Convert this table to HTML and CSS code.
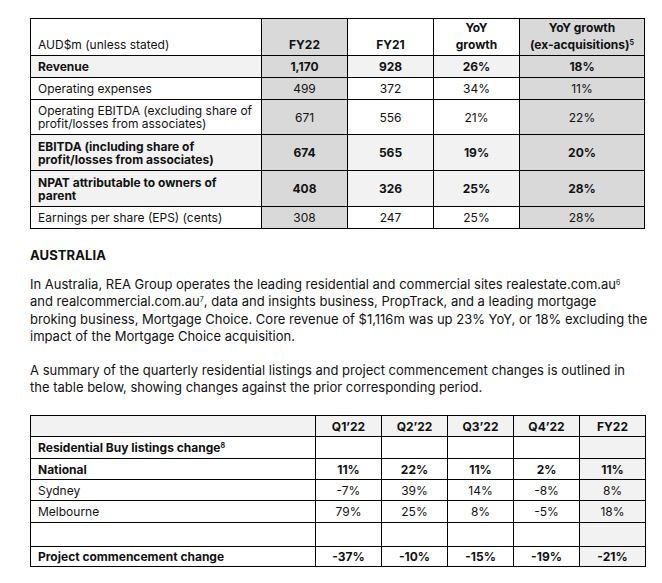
FILE: index.html
```html
<!DOCTYPE html>
<html>
<head>
<meta charset="utf-8">
<link rel="stylesheet" href="styles.css">
</head>
<body>
<div class="page">
  <table class="fin">
    <colgroup>
      <col class="c-label"><col class="c-num"><col class="c-num"><col class="c-num"><col class="c-wide">
    </colgroup>
    <tr class="head">
      <td class="label">AUD$m (unless stated)</td>
      <td class="gray b">FY22</td>
      <td class="b">FY21</td>
      <td class="b">YoY<br>growth</td>
      <td class="gray b">YoY growth<br>(ex-acquisitions)<sup>5</sup></td>
    </tr>
    <tr class="r23 hl b">
      <td class="label">Revenue</td>
      <td class="gray">1,170</td>
      <td>928</td>
      <td>26%</td>
      <td class="gray">18%</td>
    </tr>
    <tr class="r23">
      <td class="label">Operating expenses</td>
      <td class="gray">499</td>
      <td>372</td>
      <td>34%</td>
      <td class="gray">11%</td>
    </tr>
    <tr class="r35">
      <td class="label">Operating EBITDA (excluding share of profit/losses from associates)</td>
      <td class="gray">671</td>
      <td>556</td>
      <td>21%</td>
      <td class="gray">22%</td>
    </tr>
    <tr class="r36 hl b">
      <td class="label">EBITDA (including share of profit/losses from associates)</td>
      <td class="gray">674</td>
      <td>565</td>
      <td>19%</td>
      <td class="gray">20%</td>
    </tr>
    <tr class="r36 hl b">
      <td class="label">NPAT attributable to owners of parent</td>
      <td class="gray">408</td>
      <td>326</td>
      <td>25%</td>
      <td class="gray">28%</td>
    </tr>
    <tr class="r21">
      <td class="label">Earnings per share (EPS) (cents)</td>
      <td class="gray">308</td>
      <td>247</td>
      <td>25%</td>
      <td class="gray">28%</td>
    </tr>
  </table>

  <h2 class="heading">AUSTRALIA</h2>
  <p class="para">In Australia, REA Group operates the leading residential and commercial sites realestate.com.au<sup>6</sup><br>and realcommercial.com.au<sup>7</sup>, data and insights business, PropTrack, and a leading mortgage<br>broking business, Mortgage Choice. Core revenue of $1,116m was up 23% YoY, or 18% excluding the<br>impact of the Mortgage Choice acquisition.</p>
  <p class="para">A summary of the quarterly residential listings and project commencement changes is outlined in<br>the table below, showing changes against the prior corresponding period.</p>

  <table class="listings">
    <colgroup>
      <col class="l-label"><col class="l-num"><col class="l-num"><col class="l-num"><col class="l-num"><col class="l-num">
    </colgroup>
    <tr class="lhead b">
      <td class="label"></td>
      <td>Q1’22</td>
      <td>Q2’22</td>
      <td>Q3’22</td>
      <td>Q4’22</td>
      <td>FY22</td>
    </tr>
    <tr class="b row-res">
      <td class="label">Residential Buy listings change<sup>8</sup></td>
      <td></td><td></td><td></td><td></td><td class="fy"></td>
    </tr>
    <tr class="b row-nat">
      <td class="label">National</td>
      <td>11%</td><td>22%</td><td>11%</td><td>2%</td><td class="fy">11%</td>
    </tr>
    <tr class="row-syd">
      <td class="label">Sydney</td>
      <td>-7%</td><td>39%</td><td>14%</td><td>-8%</td><td class="fy">8%</td>
    </tr>
    <tr class="row-mel">
      <td class="label">Melbourne</td>
      <td>79%</td><td>25%</td><td>8%</td><td>-5%</td><td class="fy">18%</td>
    </tr>
    <tr class="row-empty">
      <td class="label"></td>
      <td></td><td></td><td></td><td></td><td class="fy"></td>
    </tr>
    <tr class="b row-proj">
      <td class="label">Project commencement change</td>
      <td>-37%</td><td>-10%</td><td>-15%</td><td>-19%</td><td class="fy">-21%</td>
    </tr>
  </table>
</div>
</body>
</html>
```

FILE: styles.css
```css
html, body {
  margin: 0;
  padding: 0;
  background: #fff;
}
body {
  font-family: Inter, "Liberation Sans", sans-serif;
  color: #111;
}
.page {
  padding: 18px 18px 0 30px;
  width: 614px;
}
table {
  border-collapse: collapse;
  table-layout: fixed;
  width: 615px;
}
td {
  border: 1px solid #000;
  padding: 0 6px;
  font-size: 12px;
  line-height: 13px;
  text-align: center;
  vertical-align: middle;
}
td.label {
  text-align: left;
  padding-left: 7px;
}
.b td { font-weight: 700; }
td.b { font-weight: 700; }
sup {
  font-size: 7px;
  line-height: 0;
  vertical-align: 4px;
}
.c-label { width: 231px; }
.c-num { width: 86px; }
.c-wide { width: 125px; }

.fin .head td {
  height: 30px;
  vertical-align: bottom;
  padding-bottom: 2px;
  line-height: 17px;
}
.fin .head td.label { font-weight: 400; }
.fin .r23 td { height: 21px; }
.fin .r21 td { height: 21px; }
.fin .r35 td { height: 34px; }
.fin .r36 td { height: 35px; }
.fin td.gray { background: #d9d9d9; }
.fin .hl td { background: #f2f2f2; }
.fin .hl td.gray { background: #d9d9d9; }

.heading {
  margin: 18px 0 0 0;
  font-size: 13px;
  line-height: 17px;
  font-weight: 700;
  letter-spacing: 0.1px;
}
.para {
  margin: 12px 0 0 0;
  width: 632px;
  font-size: 13px;
  line-height: 17.4px;
  white-space: nowrap;
}
.para + .para { margin-top: 16px; }

.listings { margin-top: 19px; }
.l-label { width: 285px; }
.l-num { width: 66px; }
.listings .lhead td { background: #f2f2f2; height: 20px; }
.listings .row-res td { height: 21px; }
.listings .row-nat td { height: 20px; }
.listings .row-syd td { height: 20px; }
.listings .row-mel td { height: 21px; }
.listings .row-empty td { height: 23px; }
.listings .row-proj td { height: 19px; }
.listings td.fy { background: #f2f2f2; }
```
